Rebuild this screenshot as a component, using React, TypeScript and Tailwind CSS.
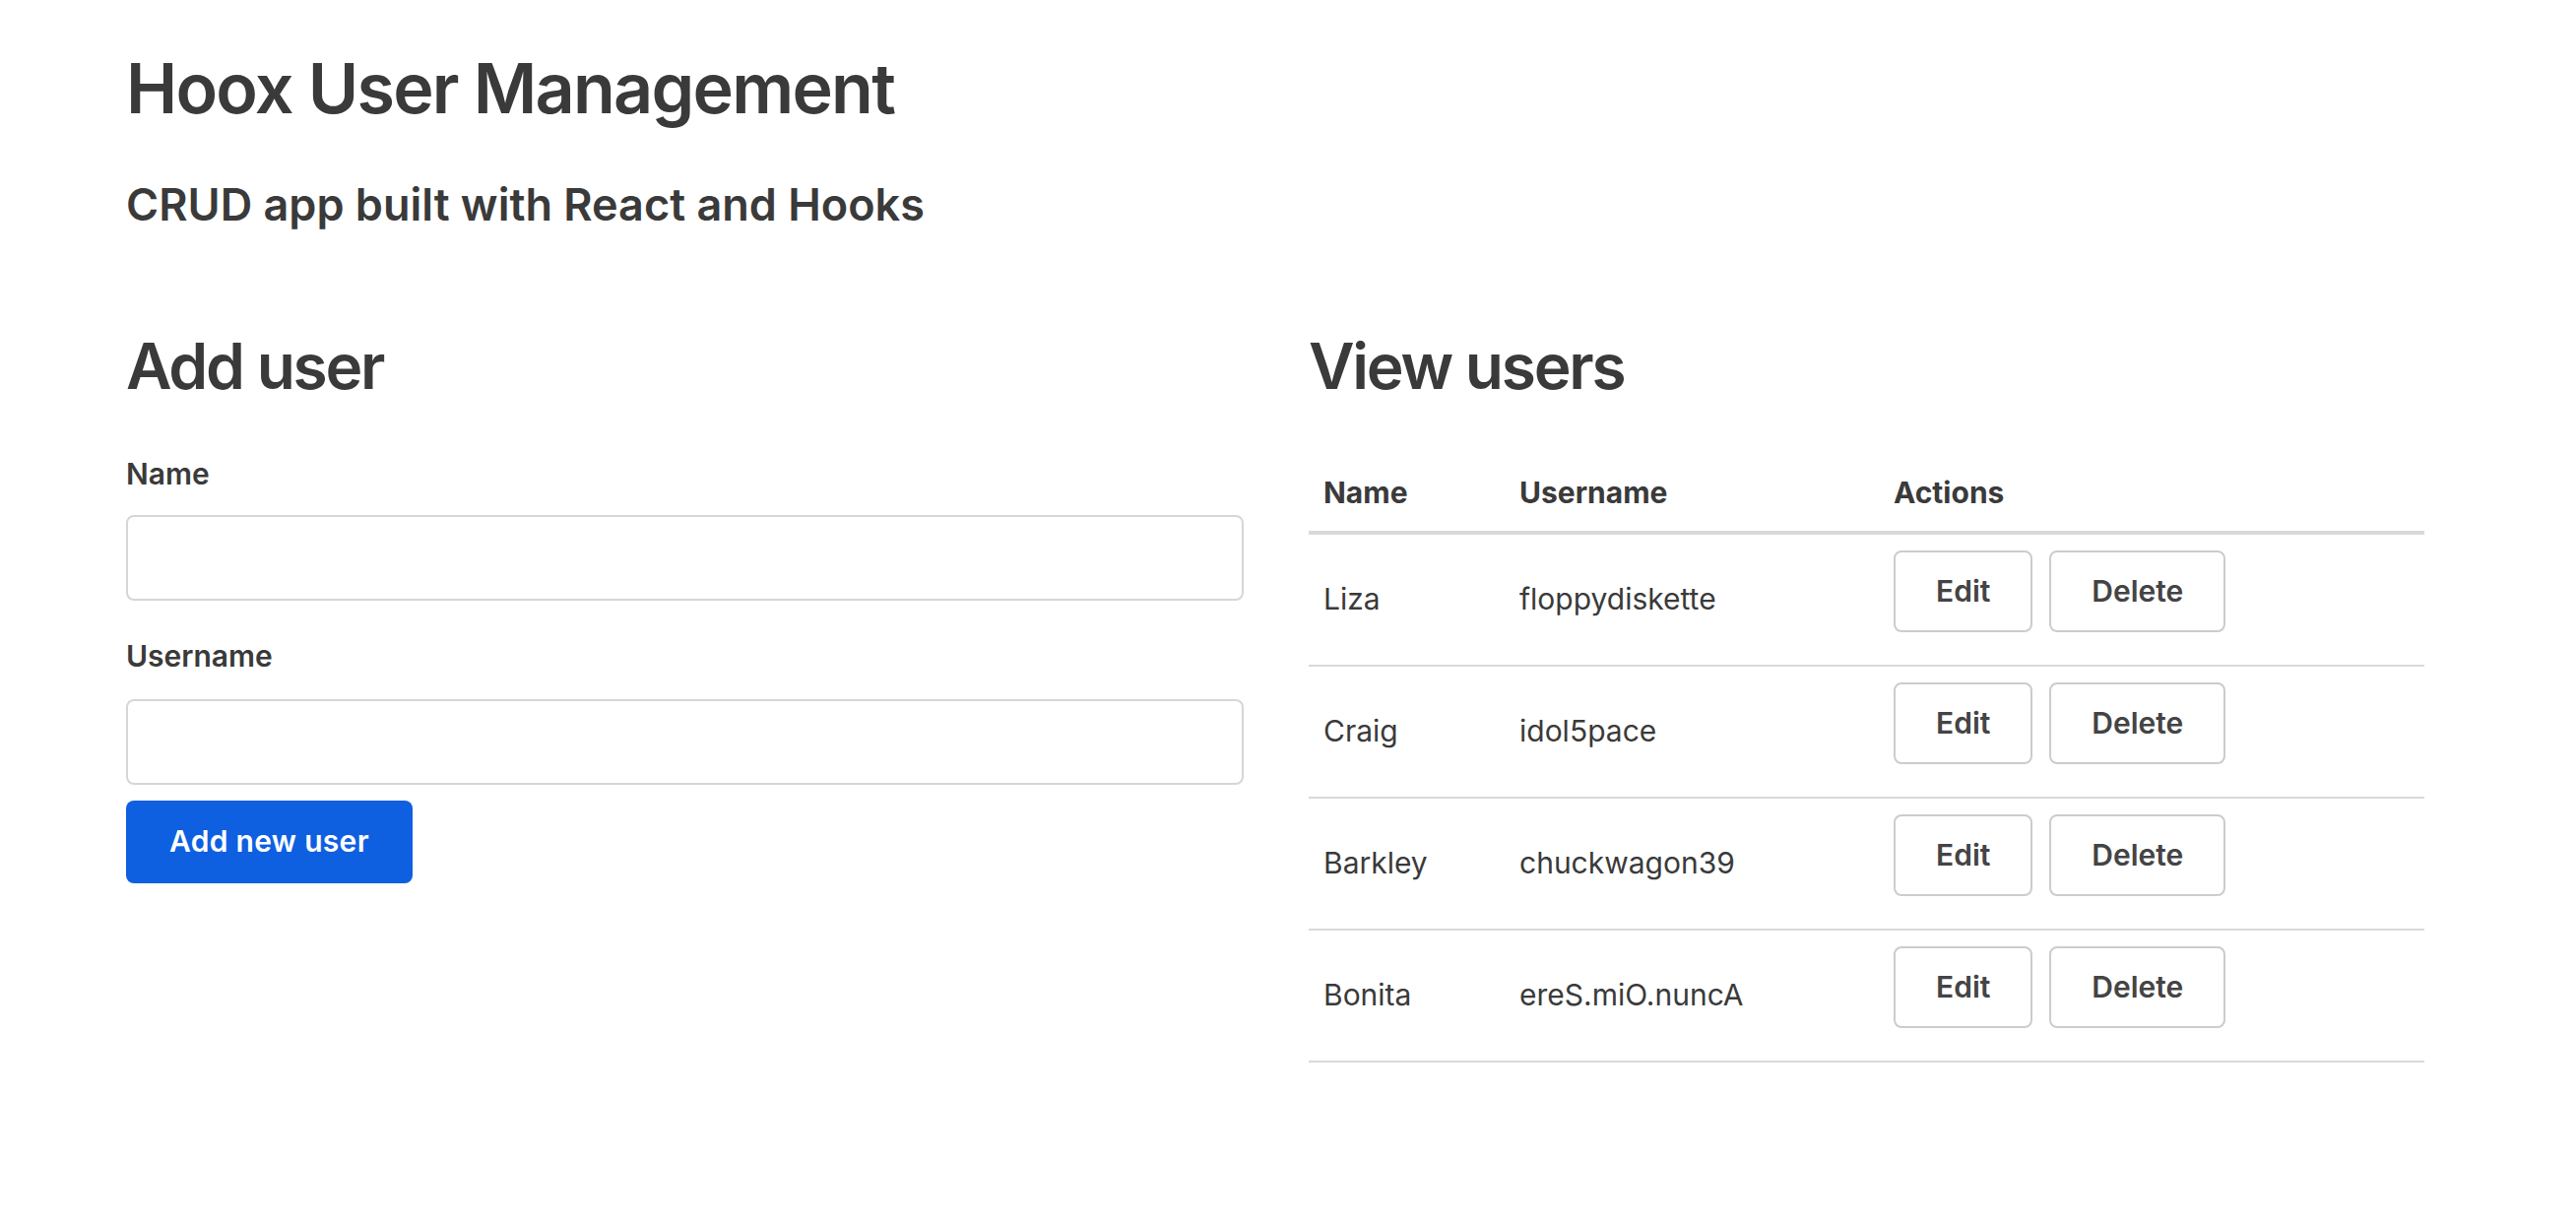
import { useState } from "react";

type User = {
  id: number;
  name: string;
  username: string;
};

const initialUsers: User[] = [
  { id: 1, name: "Liza", username: "floppydiskette" },
  { id: 2, name: "Craig", username: "idol5pace" },
  { id: 3, name: "Barkley", username: "chuckwagon39" },
  { id: 4, name: "Bonita", username: "ereS.miO.nuncA" },
];

export default function App() {
  const [users, setUsers] = useState<User[]>(initialUsers);
  const [name, setName] = useState("");
  const [username, setUsername] = useState("");

  function addUser(e: React.FormEvent) {
    e.preventDefault();
    if (!name || !username) return;
    setUsers([...users, { id: users.length + 1, name, username }]);
    setName("");
    setUsername("");
  }

  function deleteUser(id: number) {
    setUsers(users.filter((u) => u.id !== id));
  }

  return (
    <div className="min-h-[1244px] bg-white text-[#3a3a3a] font-['Inter','Liberation_Sans',sans-serif] pl-[128px] pt-[48px]">
      <h1 className="text-[70px] leading-[1.2] font-semibold tracking-[-0.025em]">Hoox User Management</h1>
      <h2 className="mt-[49px] text-[45px] leading-[1.2] font-semibold">
        CRUD app built with React and Hooks
      </h2>

      <div className="mt-[99px] grid grid-cols-[1135px_1133px] gap-x-[66px]">
        {/* Add user */}
        <div className="flex flex-col">
          <h2 className="text-[64px] leading-[1.2] font-semibold tracking-[-0.035em]">Add user</h2>
          <form onSubmit={addUser} className="flex flex-col">
            <label className="mt-[52px] text-[30px] leading-[36px] font-semibold">Name</label>
            <input
              className="mt-[24px] h-[87px] w-full rounded-[8px] border-2 border-[#d6d6d6] px-5 text-[30px] outline-none"
              value={name}
              onChange={(e) => setName(e.target.value)}
            />
            <label className="mt-[38px] text-[30px] leading-[36px] font-semibold">Username</label>
            <input
              className="mt-[26px] h-[87px] w-full rounded-[8px] border-2 border-[#d6d6d6] px-5 text-[30px] outline-none"
              value={username}
              onChange={(e) => setUsername(e.target.value)}
            />
            <div className="mt-[16px]">
              <button
                type="submit"
                className="h-[84px] rounded-[8px] bg-[#0f5fe1] px-[44px] text-[30px] font-semibold text-white tracking-[0.01em]"
              >
                Add new user
              </button>
            </div>
          </form>
        </div>

        {/* View users */}
        <div className="flex flex-col">
          <h2 className="text-[64px] leading-[1.2] font-semibold tracking-[-0.035em]">View users</h2>
          <table className="mt-[50px] w-[1133px] table-fixed border-collapse text-left">
            <colgroup>
              <col className="w-[199px]" />
              <col className="w-[380px]" />
              <col className="w-[554px]" />
            </colgroup>
            <thead>
              <tr className="border-b-4 border-[#d9d9d9]">
                <th className="px-[15px] py-[21px] text-[30px] leading-[36px] font-bold">Name</th>
                <th className="px-[15px] py-[21px] text-[30px] leading-[36px] font-bold">Username</th>
                <th className="px-[15px] py-[21px] text-[30px] leading-[36px] font-bold">Actions</th>
              </tr>
            </thead>
            <tbody>
              {users.map((user) => (
                <tr key={user.id} className="border-b-2 border-[#d9d9d9]">
                  <td className="px-[15px] pt-[16px] pb-[17px] align-middle text-[30px] leading-[36px]">{user.name}</td>
                  <td className="px-[15px] pt-[16px] pb-[17px] align-middle text-[30px] leading-[36px]">{user.username}</td>
                  <td className="px-[15px] pt-[16px] pb-[17px] align-middle">
                    <div className="mb-[16px] flex gap-[17px]">
                      <button className="h-[83px] rounded-[8px] border-2 border-[#cccccc] bg-white px-[41px] text-[30px] font-semibold text-[#444444]">
                        Edit
                      </button>
                      <button
                        className="h-[83px] rounded-[8px] border-2 border-[#cccccc] bg-white px-[41px] text-[30px] font-semibold text-[#444444]"
                        onClick={() => deleteUser(user.id)}
                      >
                        Delete
                      </button>
                    </div>
                  </td>
                </tr>
              ))}
            </tbody>
          </table>
        </div>
      </div>
    </div>
  );
}
